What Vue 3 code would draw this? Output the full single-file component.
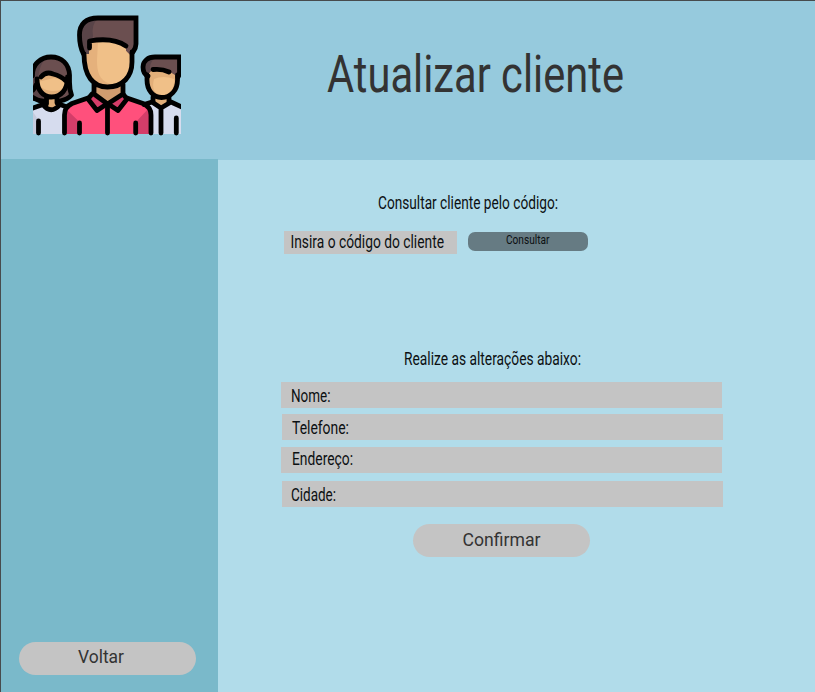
<script setup>
const title = { text: 'Atualizar cliente', x: 328, y: 92.3, width: 297 }
const fields = [
  { label: 'Nome:', x: 10, y: 20, width: 39.5 },
  { label: 'Telefone:', x: 10, y: 20, width: 57 },
  { label: 'Endereço:', x: 11, y: 18, width: 61 },
  { label: 'Cidade:', x: 9, y: 20, width: 45 }
]
</script>

<template>
  <div class="page">
    <header class="header">
      <svg class="logo" viewBox="33 15 148 121">
        <g stroke="none">
          <path fill="#6b4f50" d="M33 72C34 62 42 57 51 57C62 57 69 64 70 74V88L73 96L60 101H33Z" />
          <path fill="#594448" d="M33 73C34 64 40 58 47 57C42 62 39 68 38 79L43 98H33Z" />
          <path fill="#e0ad78" d="M46 93H57V105L51 110L45 105Z" />
          <path fill="#e2af79" d="M37 80Q47 70 53 74Q61 75 67 81C66 91 60 97 52 97C43 97 38 91 37 80Z" />
          <path fill="#f0c088" d="M38 82L54 78Q61 79 66 82C66 88 61 91 54 91C47 91 41 89 38 82Z" />
          <path fill="#d6dcee" d="M33 108L43 105Q51 114 60 105L68 108V134H33Z" />
          <path fill="#c5cbdd" d="M33 112L39 121V134H33Z" />
          <path fill="#6b4f50" d="M148 76C143 74 143 70 143 68C143 61 148 57 155 57H180V75L177 77Z" />
          <path fill="#594448" d="M148 76C143 74 143 70 143 68C143 61 148 57 155 57Q149 63 150 72Z" />
          <path fill="#e0ad78" d="M153 92H169V103L161 108L152 103Z" />
          <path fill="#e2af79" d="M147 76L152 70H167L178 77C178 90 171 97 161.500 97C152 97 146 90 147 76Z" />
          <path fill="#f0c088" d="M154 79Q163 75 174 79C175 88 170 95 161.500 95C153 94 152 87 154 79Z" />
          <path fill="#d6dcee" d="M145 105L152 103L161 108L171 103L181 107V134H151V116Z" />
          <path fill="#6b4f50" d="M85 54C81 48 79.500 42 79.500 35C79.500 24 86 18 98 18H136V45L132 57L85 55Z" />
          <path fill="#594448" d="M85 54C81 48 79.500 42 79.500 35C79.500 24 86 18 98 18Q91 25 93 36L89 54Z" />
          <path fill="#d19c6f" d="M93 82H123V95L107.500 104L93 95Z" />
          <path fill="#e5b17c" d="M84 54H89V41Q109 37 126 46V51L132 57C132 76 123 87 107.500 87C92 87 84 75 84 54Z" />
          <path fill="#f0c088" d="M98 41Q114 39 126 46V51L132 57C131 76 124 84 110 84C99 80 97 72 97 60Z" />
          <path fill="#ff507c" d="M66 134V115Q66 107 72 103L90 97L107.500 104L126 97L145 104Q151 107 151 115V134Z" />
          <path fill="#d43d69" d="M67 110L79.500 122V134H66ZM149 108L136 122V134H151ZM92 95L107 105L97 111L88 99ZM123 95L108 105L118 111L127 99Z" />
        </g>
        <g class="lines">
          <path d="M32.500 76C32 64 41 57 51 57C62 57 69 64 69.500 75V82C69.500 89 70 91 71.500 95C69 98 65 100 60 101" />
          <path d="M33 90Q35 88 36 85M32 97Q38 101 43 101" />
          <path d="M41 77Q46 71 53 74Q61 76 66 81M37 79C37 90 43 97 51.500 97C61 97 67.500 90 67.500 77M46.500 98V104M57 98V103" />
          <path d="M33 108L43 104.500Q51 115 60 104.500L67 107M38.500 121V133" />
          <path class="sharp" d="M148 76C143 74 143 70 143 67C143 61 148 57 155 57H179.500V72Q179.500 75 178 77" />
          <path d="M153 69.500Q162 68.500 169 72" />
          <path d="M147 75V80C147 90 153 97.500 161.500 97.500C171 97.500 177.500 90 177.500 80V75M153 97V102M169 97V102" />
          <path d="M144 104.500L152 102L161 108L171 102L182 107M161 108V133M176.300 118V133" />
          <path class="sharp" d="M83.500 54C80.500 48 79.500 42 79.500 35C79.500 24 86 18 98 18H136V44Q136 48 133 52" />
          <path d="M89.500 48V41Q113 37 126 46M84 54C84 76 93 87 107.500 87C123 87 132 76 132 62V52M94 84V94L107.500 104L123 94V84" />
          <path d="M92 94L88 99L97 110.500L107.500 103.500L118 110.500L127 99L123 94" />
          <path d="M88 98L72 103.500Q64.500 107 64.500 115V133M127 98L143 103.500Q151 107 151 115V133M107.500 104V133M79.500 123V133M135.700 123V133" />
        </g>
      </svg>
      <h1 class="heading">
        <svg class="ink title"><text :x="title.x - 182" :y="title.y - 15" :textLength="title.width" lengthAdjust="spacingAndGlyphs">{{ title.text }}</text></svg>
      </h1>
    </header>

    <div class="body">
      <aside class="sidebar">
        <button class="pill">
          <svg class="ink action"><text x="59" y="21.300" textLength="46" lengthAdjust="spacingAndGlyphs">Voltar</text></svg>
        </button>
      </aside>

      <main class="content">
        <svg class="ink caption"><text x="160" y="17.500" textLength="180" lengthAdjust="spacingAndGlyphs">Consultar cliente pelo código:</text></svg>
        <div class="search">
          <div class="code">
            <svg class="ink"><text x="6.500" y="17" textLength="153.500" lengthAdjust="spacingAndGlyphs">Insira o código do cliente</text></svg>
          </div>
          <button class="query">
            <svg class="ink small"><text x="38" y="12.400" textLength="43.500" lengthAdjust="spacingAndGlyphs">Consultar</text></svg>
          </button>
        </div>
        <svg class="ink caption second"><text x="186" y="18" textLength="177" lengthAdjust="spacingAndGlyphs">Realize as alterações abaixo:</text></svg>
        <form class="form">
          <div v-for="f in fields" :key="f.label" class="field">
            <svg class="ink"><text :x="f.x" :y="f.y" :textLength="f.width" lengthAdjust="spacingAndGlyphs">{{ f.label }}</text></svg>
          </div>
          <button type="button" class="pill confirm">
            <svg class="ink action"><text x="49.500" y="21.600" textLength="78" lengthAdjust="spacingAndGlyphs">Confirmar</text></svg>
          </button>
        </form>
      </main>
    </div>
  </div>
</template>

<style>
body { margin: 0; }
</style>

<style scoped>
* { box-sizing: border-box; }
.page {
  width: 815px;
  height: 692px;
  display: flex;
  flex-direction: column;
  overflow: hidden;
  border-top: 1px solid #474b4d;
  border-left: 1px solid #474b4d;
  background: #b1dcea;
  font-family: Roboto, "Liberation Sans", sans-serif;
}
.header {
  flex: none;
  height: 159px;
  display: flex;
  padding: 14px 0 0 32px;
  background: #96cadd;
}
.logo { width: 148px; height: 121px; flex: none; }
.lines {
  fill: none;
  stroke: #000;
  stroke-width: 4.8;
  stroke-linecap: round;
  stroke-linejoin: round;
}
.sharp { stroke-linejoin: miter; }
.heading { flex: 1; margin: 0; font-weight: 400; }
.ink {
  display: block;
  width: 100%;
  height: 100%;
  overflow: visible;
  font-size: 17.5px;
  fill: #0c1012;
}
.title { font-size: 52px; fill: #333; }
.body { flex: 1; display: flex; min-height: 0; }
.sidebar {
  width: 217px;
  margin-top: -1px;
  padding: 0 0 17px 18px;
  display: flex;
  align-items: flex-end;
  background: #7ab9ca;
}
.content { flex: 1; padding-top: 31px; }
button { border: 0; padding: 0; font-family: inherit; }
.pill {
  display: block;
  width: 177px;
  height: 33px;
  border-radius: 17px;
  background: #c4c4c4;
}
.action { font-size: 18px; fill: #333; }
.caption { height: 24px; }
.search { display: flex; gap: 10.5px; margin: 16px 0 0 66px; }
.code { width: 173px; height: 23px; background: #c4c4c4; }
.query {
  width: 120px;
  height: 19px;
  margin-top: 1px;
  border-radius: 7px;
  background: #667b83;
}
.small { font-size: 13.5px; }
.second { margin-top: 93px; }
.form { padding: 11px 0 0 63px; }
.field { width: 441px; height: 26px; margin-bottom: 6px; background: #c4c4c4; }
.field:nth-child(even) { margin-left: 1px; }
.field:nth-child(2) { margin-bottom: 7px; }
.field:nth-child(3) { margin-bottom: 8px; }
.field:nth-child(4) { margin-bottom: 17px; }
.confirm { margin-left: 132px; }
</style>
